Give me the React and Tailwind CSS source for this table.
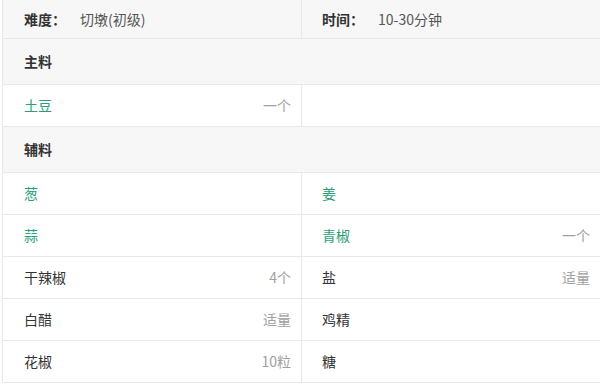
import React from "react";

const font = { fontFamily: '"Noto Sans CJK SC", "Noto Sans", sans-serif' };

function Cell({ name, qty, green, left }) {
  return (
    <div
      className={`flex items-center justify-between h-full ${
        left ? "pl-[21px] pr-[10px]" : "pl-[20px] pr-[10px] border-l border-[#e8e8e8]"
      }`}
    >
      <span className={green ? "text-[#2e9e7a]" : "text-[#333]"}>{name}</span>
      <span className="text-[#a0a0a0]">{qty}</span>
    </div>
  );
}

function Row({ a, b }) {
  return (
    <div className="grid grid-cols-[298px_1fr] h-[42px] border-b border-[#e8e8e8] bg-white">
      <Cell left {...a} />
      <Cell {...b} />
    </div>
  );
}

function Header({ title, h }) {
  return (
    <div
      className={`${h} flex items-center pl-[21px] bg-[#f7f7f7] border-b border-[#e8e8e8] font-bold text-[#333]`}
    >
      {title}
    </div>
  );
}

export default function App() {
  return (
    <div className="w-[600px] h-[385px] bg-white text-[14px] overflow-hidden" style={font}>
      <div className="ml-[2px] border-l border-[#e8e8e8]">
        <div className="grid grid-cols-[298px_1fr] h-[39px] bg-[#f7f7f7] border-b border-[#e8e8e8]">
          <div className="flex items-center pl-[21px]">
            <span className="font-bold text-[#333] w-[56px]">难度：</span>
            <span className="text-[#555]">切墩(初级)</span>
          </div>
          <div className="flex items-center pl-[20px] border-l border-[#e8e8e8]">
            <span className="font-bold text-[#333] w-[56px]">时间：</span>
            <span className="text-[#555]">10-30分钟</span>
          </div>
        </div>
        <Header title="主料" h="h-[46px]" />
        <Row a={{ name: "土豆", qty: "一个", green: true }} b={{ name: "", qty: "" }} />
        <Header title="辅料" h="h-[46px]" />
        <Row a={{ name: "葱", qty: "", green: true }} b={{ name: "姜", qty: "", green: true }} />
        <Row a={{ name: "蒜", qty: "", green: true }} b={{ name: "青椒", qty: "一个", green: true }} />
        <Row a={{ name: "干辣椒", qty: "4个" }} b={{ name: "盐", qty: "适量" }} />
        <Row a={{ name: "白醋", qty: "适量" }} b={{ name: "鸡精", qty: "" }} />
        <Row a={{ name: "花椒", qty: "10粒" }} b={{ name: "糖", qty: "" }} />
      </div>
    </div>
  );
}
